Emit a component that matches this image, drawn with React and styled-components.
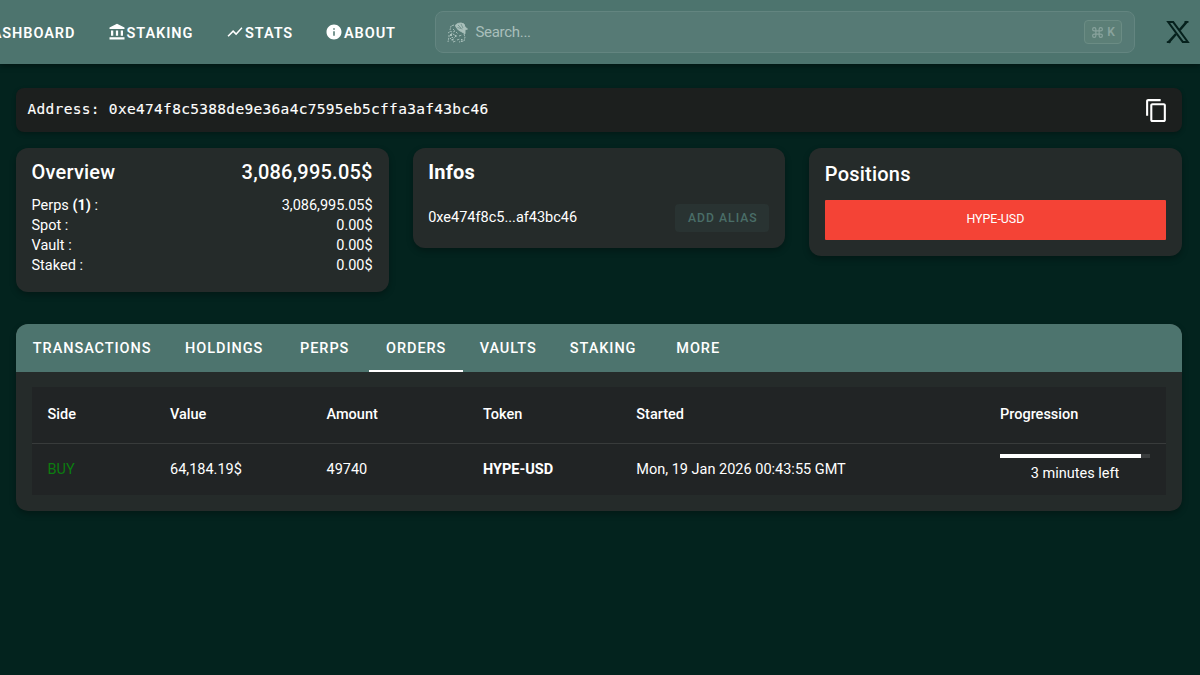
import React from "react";
import styled, { createGlobalStyle } from "styled-components";
import { MdAccountBalance, MdShowChart, MdInfo, MdContentCopy, MdDashboard } from "react-icons/md";

const Global = createGlobalStyle`
  *, *::before, *::after { box-sizing: border-box; }
  body {
    margin: 0;
    background: #03231e;
    color: #fff;
    font-family: Roboto, sans-serif;
    font-size: 14.5px;
    overflow: hidden;
  }
`;

const Page = styled.div`
  min-height: 675px;
`;

const TopBar = styled.header`
  display: flex;
  align-items: center;
  height: 64px;
  background: #4d746e;
  box-shadow: 0 2px 6px rgba(0, 0, 0, 0.4);
`;

const Nav = styled.nav`
  display: flex;
  justify-content: flex-end;
  width: 398px;
  gap: 32px;
`;

const NavLink = styled.a`
  display: flex;
  flex: none;
  align-items: center;
  gap: 1px;
  width: ${(p) => p.$width}px;
  height: 36px;
  padding-top: 2px;
  font-size: 14.5px;
  font-weight: 600;
  letter-spacing: 0.93px;
  white-space: nowrap;

  svg {
    flex: none;
    width: 18px;
    height: 18px;
    margin-top: -3px;
  }
`;

const SearchBox = styled.div`
  display: flex;
  align-items: center;
  width: 700px;
  height: 42px;
  margin-left: 37px;
  padding: 0 12px 0 11px;
  border: 1px solid #638580;
  border-radius: 8px;
  background: #567a75;
  color: #a9bfbb;
  font-size: 15px;

  svg {
    margin-right: 7.5px;
  }
`;

const SearchHint = styled.span`
  flex: 1;
  padding-bottom: 1px;
  letter-spacing: -0.3px;
`;

const Shortcut = styled.kbd`
  display: flex;
  align-items: center;
  justify-content: center;
  gap: 3px;
  width: 38px;
  height: 24px;
  border: 1px solid #6b8c84;
  border-radius: 4px;
  background: #5c7f77;
  color: #89a39d;
  font: 600 12px Roboto, sans-serif;

  svg {
    margin: 0;
  }
`;

const SocialLink = styled.a`
  display: flex;
  margin-left: 30.5px;
  color: #06211d;
`;

const Main = styled.main`
  padding: 24px 18px 0 16px;
`;

const AddressBar = styled.section`
  display: flex;
  align-items: center;
  justify-content: space-between;
  height: 44px;
  padding: 0 13.5px 0 11.5px;
  border-radius: 8px;
  background: #1c1f1e;
  box-shadow: 0 2px 4px rgba(0, 0, 0, 0.25);
`;

const Address = styled.span`
  padding-bottom: 2px;
  font-family: "DejaVu Sans Mono", monospace;
  font-size: 14.5px;
  letter-spacing: 0.31px;
  -webkit-text-stroke: 0.12px #fff;
`;

const Cards = styled.div`
  display: grid;
  grid-template-columns: repeat(3, 1fr);
  align-items: start;
  gap: 24px;
  height: 175.5px;
  margin-top: 16px;
`;

const Card = styled.section`
  height: ${(p) => p.$height}px;
  padding: ${(p) => p.$top || 9}px 16px 0 15.5px;
  border-radius: 12px;
  background: #252b2a;
  box-shadow: 0 3px 6px rgba(0, 0, 0, 0.28);
`;

const CardTitle = styled.h2`
  display: flex;
  justify-content: space-between;
  margin: 0;
  font-size: 20px;
  font-weight: ${(p) => p.$weight || 500};
  line-height: 30px;
  letter-spacing: 0.22px;
`;

const Balances = styled.div`
  margin-top: 9px;
`;

const BalanceRow = styled.div`
  display: flex;
  justify-content: space-between;
  font-size: 14.5px;
  line-height: 20px;

  b {
    font-weight: 700;
  }
`;

const AliasRow = styled.div`
  display: flex;
  align-items: center;
  justify-content: space-between;
  margin-top: 16.5px;
`;

const AliasAddress = styled.span`
  padding-bottom: 0.5px;
`;

const AliasButton = styled.button`
  width: 94px;
  height: 28px;
  padding: 0;
  border: 0;
  border-radius: 4px;
  background: #293332;
  color: #4a6e68;
  font: 500 12.2px Roboto, sans-serif;
  letter-spacing: 1px;
  text-indent: 1px;
`;

const PositionTile = styled.div`
  display: grid;
  place-items: center;
  height: 40px;
  margin-top: 10.5px;
  padding-bottom: 2px;
  border-radius: 1px;
  background: #f44336;
  font-size: 12.4px;
`;

const Panel = styled.section`
  height: 187.5px;
  border-radius: 12px;
  background: #252b2a;
  box-shadow: 0 3px 6px rgba(0, 0, 0, 0.28);
  overflow: hidden;
`;

const TabBar = styled.div`
  display: flex;
  height: 48px;
  background: #4d746e;
`;

const Tab = styled.button`
  width: ${(p) => p.$width}px;
  padding: 3px 0 0;
  border: 0;
  border-bottom: 2px solid ${(p) => (p.$active ? "#fff" : "transparent")};
  background: none;
  color: #fff;
  font: 500 14.5px Roboto, sans-serif;
  letter-spacing: 0.94px;
  text-indent: 0.3px;
`;

const Orders = styled.table`
  width: 1134px;
  margin: 15.5px 16px 0;
  border-collapse: collapse;
  table-layout: fixed;
  background: #212425;

  th,
  td {
    padding: 0 15.5px;
    text-align: left;
    white-space: nowrap;
  }

  th {
    height: 56px;
    border-bottom: 1px solid #383b3b;
    font-weight: 500;
  }

  td {
    height: 52px;
  }
`;

const Side = styled.span`
  color: #0c7c10;
`;

const Progress = styled.div`
  width: 150px;
  text-align: center;
  line-height: 20px;
`;

const Track = styled.div`
  height: 4px;
  margin-bottom: 6px;
  background: #3b3e3f;
`;

const Fill = styled.div`
  height: 100%;
  background: #fff;
`;

const CatMark = () => (
  <svg width="21" height="21" viewBox="0 0 21 21" fill="none" stroke="#a9c0bb" strokeWidth=".95">
    <path d="M8.500 3l2.500-1.600 3-.4 3 1 1 3 2.500 2-2.500 .8v4l-3-1.800-3.600-2L9 5z" fill="#a9c0bb" />
    <path d="M11 3l3 3M14 2l2 4M10.500 5.500l5 1.500" stroke="#567a75" strokeWidth=".6" />
    <path d="M7 3L4 4 3 8M6 7l2 2-2 1M1 11l3-2 1 3M2 13v2l-1 5M3 17l2-2 2 2M6 12l3 2-2 2M9 10l2 2M12 14l3-1M17 12l1 3-1 4-5 1M10 18l3-1M6 20l3-1" strokeDasharray="2 .8" />
    <path d="M3 12h2v2H3zM8 13h1.500v2H8zM4.500 17h2v1.500h-2zM14 17h1.500v1.500H14z" fill="#a9c0bb" stroke="none" />
  </svg>
);

const CommandGlyph = () => (
  <svg width="13" height="13" viewBox="0 0 24 24" fill="none" stroke="currentColor" strokeWidth="2.2">
    <path d="M15 6v12a3 3 0 1 0 3-3H6a3 3 0 1 0 3 3V6a3 3 0 1 0-3 3h12a3 3 0 1 0-3-3" />
  </svg>
);

const XLogo = () => (
  <svg width="24" height="24" viewBox="0 0 24 24" fill="none" stroke="currentColor">
    <path d="M2.200 2.100H7.200L21.800 21.900H16.800Z" strokeWidth="2" />
    <path d="M21 1.500L13.700 10M10 14L2.300 22.700" strokeWidth="2.600" />
    <path d="M18.500 1.900H22.500M.8 22.100H4.500" strokeWidth="1.600" />
  </svg>
);

const links = [
  ["DASHBOARD", 113, MdDashboard],
  ["STAKING", 86.5, MdAccountBalance],
  ["STATS", 67, MdShowChart],
  ["ABOUT", 73, MdInfo],
];

const balances = [
  ["Spot :", "0.00$"],
  ["Vault :", "0.00$"],
  ["Staked :", "0.00$"],
];

const tabs = [
  ["TRANSACTIONS", 152],
  ["HOLDINGS", 112],
  ["PERPS", 89],
  ["ORDERS", 94],
  ["VAULTS", 90],
  ["STAKING", 100],
  ["MORE", 90],
];

const columns = [
  ["Side", 122.5],
  ["Value", 156.5],
  ["Amount", 156.5],
  ["Token", 153.3],
  ["Started", 363.7],
  ["Progression", 181.5],
];

export default function App() {
  return (
    <Page>
      <Global />
      <TopBar>
        <Nav>
          {links.map(([label, width, Icon]) => (
            <NavLink key={label} $width={width}>
              <Icon />
              {label}
            </NavLink>
          ))}
        </Nav>
        <SearchBox>
          <CatMark />
          <SearchHint>Search...</SearchHint>
          <Shortcut>
            <CommandGlyph />K
          </Shortcut>
        </SearchBox>
        <SocialLink>
          <XLogo />
        </SocialLink>
      </TopBar>
      <Main>
        <AddressBar>
          <Address>Address: 0xe474f8c5388de9e36a4c7595eb5cffa3af43bc46</Address>
          <MdContentCopy size={25} />
        </AddressBar>
        <Cards>
          <Card $height={143.5}>
            <CardTitle>
              <span>Overview</span>
              <span>3,086,995.05$</span>
            </CardTitle>
            <Balances>
              <BalanceRow>
                <span>
                  Perps <b>(1)</b> :
                </span>
                <span>3,086,995.05$</span>
              </BalanceRow>
              {balances.map(([name, value]) => (
                <BalanceRow key={name}>
                  <span>{name}</span>
                  <span>{value}</span>
                </BalanceRow>
              ))}
            </Balances>
          </Card>
          <Card $height={99.5}>
            <CardTitle $weight={700}>Infos</CardTitle>
            <AliasRow>
              <AliasAddress>0xe474f8c5...af43bc46</AliasAddress>
              <AliasButton>ADD ALIAS</AliasButton>
            </AliasRow>
          </Card>
          <Card $height={107.5} $top={11}>
            <CardTitle>Positions</CardTitle>
            <PositionTile>HYPE-USD</PositionTile>
          </Card>
        </Cards>
        <Panel>
          <TabBar>
            {tabs.map(([label, width]) => (
              <Tab key={label} $width={width} $active={label === "ORDERS"}>
                {label}
              </Tab>
            ))}
          </TabBar>
          <Orders>
            <colgroup>
              {columns.map(([name, width]) => (
                <col key={name} style={{ width }} />
              ))}
            </colgroup>
            <thead>
              <tr>
                {columns.map(([name]) => (
                  <th key={name}>{name}</th>
                ))}
              </tr>
            </thead>
            <tbody>
              <tr>
                <td>
                  <Side>BUY</Side>
                </td>
                <td>64,184.19$</td>
                <td>49740</td>
                <td>
                  <b>HYPE-USD</b>
                </td>
                <td>Mon, 19 Jan 2026 00:43:55 GMT</td>
                <td>
                  <Progress>
                    <Track>
                      <Fill style={{ width: "94%" }} />
                    </Track>
                    3 minutes left
                  </Progress>
                </td>
              </tr>
            </tbody>
          </Orders>
        </Panel>
      </Main>
    </Page>
  );
}
